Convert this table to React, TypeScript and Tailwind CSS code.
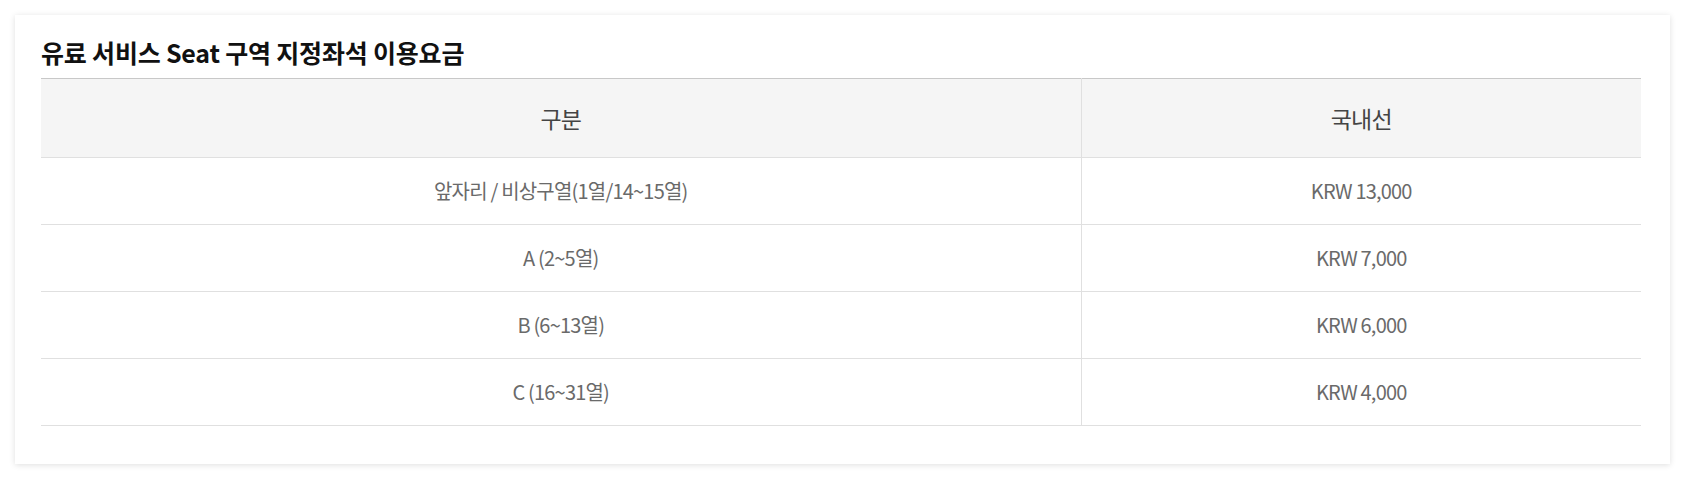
import React from 'react';

const rows = [
  { zone: '앞자리 / 비상구열(1열/14~15열)', price: 'KRW 13,000' },
  { zone: 'A (2~5열)', price: 'KRW 7,000' },
  { zone: 'B (6~13열)', price: 'KRW 6,000' },
  { zone: 'C (16~31열)', price: 'KRW 4,000' },
];

const App: React.FC = () => {
  return (
    <div className="min-h-[478px] bg-white p-[15px] font-['Noto_Sans_CJK_KR','Noto_Sans',sans-serif]">
      <div className="bg-white pl-[26px] pr-[29px] pt-[19px] pb-[38px] shadow-[0_1px_6px_rgba(0,0,0,0.13)]">
        <h2 className="text-[25px] leading-[36px] font-bold tracking-[-0.2px] text-[#111] mb-[8px]">
          유료 서비스 Seat 구역 지정좌석 이용요금
        </h2>
        <table className="w-full border-collapse table-fixed">
          <colgroup>
            <col className="w-[1040px]" />
            <col />
          </colgroup>
          <thead>
            <tr className="bg-[#f5f5f5] border-t border-[#c8c8c8]">
              <th className="h-[79px] border-b border-[#e0e0e0] border-r text-[23px] font-normal text-[#444] tracking-[-0.8px]">
                구분
              </th>
              <th className="h-[79px] border-b border-[#e0e0e0] text-[23px] font-normal text-[#444] tracking-[-0.8px]">
                국내선
              </th>
            </tr>
          </thead>
          <tbody>
            {rows.map((r) => (
              <tr key={r.zone}>
                <td className="h-[67px] border-b border-r border-[#e0e0e0] text-center text-[20px] text-[#6a6a6a] tracking-[-0.8px]">
                  {r.zone}
                </td>
                <td className="h-[67px] border-b border-[#e0e0e0] text-center text-[20px] text-[#6a6a6a] tracking-[-0.8px]">
                  {r.price}
                </td>
              </tr>
            ))}
          </tbody>
        </table>
      </div>
    </div>
  );
};

export default App;
